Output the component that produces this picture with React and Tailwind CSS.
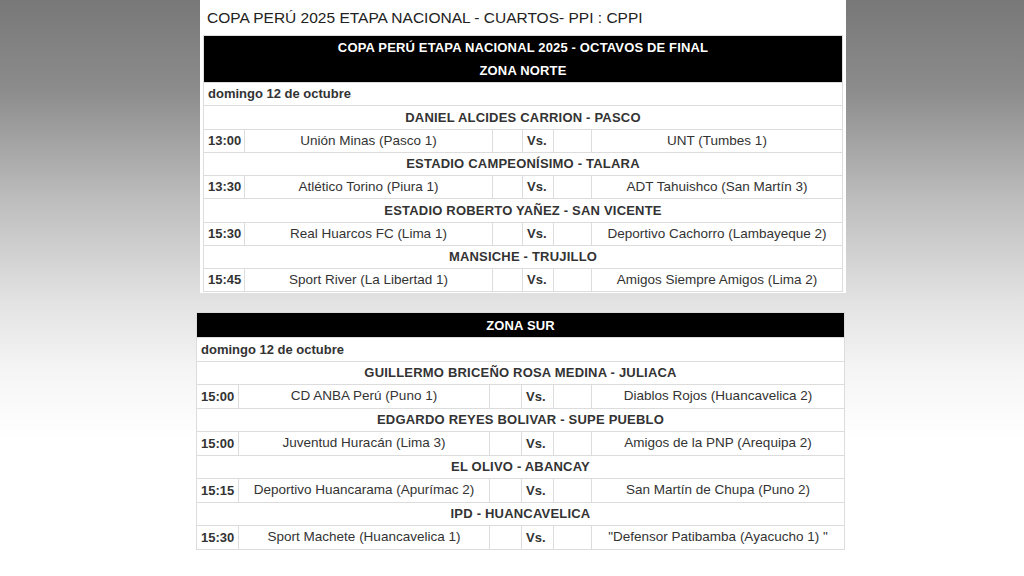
import React from 'react';

const norte = [
  { venue: 'DANIEL ALCIDES CARRION - PASCO', time: '13:00', home: 'Unión Minas (Pasco 1)', away: 'UNT (Tumbes 1)' },
  { venue: 'ESTADIO CAMPEONÍSIMO - TALARA', time: '13:30', home: 'Atlético Torino (Piura 1)', away: 'ADT Tahuishco (San Martín 3)' },
  { venue: 'ESTADIO ROBERTO YAÑEZ - SAN VICENTE', time: '15:30', home: 'Real Huarcos FC (Lima 1)', away: 'Deportivo Cachorro (Lambayeque 2)' },
  { venue: 'MANSICHE - TRUJILLO', time: '15:45', home: 'Sport River (La Libertad 1)', away: 'Amigos Siempre Amigos (Lima 2)' },
];

const sur = [
  { venue: 'GUILLERMO BRICEÑO ROSA MEDINA - JULIACA', time: '15:00', home: 'CD ANBA Perú (Puno 1)', away: 'Diablos Rojos (Huancavelica 2)' },
  { venue: 'EDGARDO REYES BOLIVAR - SUPE PUEBLO', time: '15:00', home: 'Juventud Huracán (Lima 3)', away: 'Amigos de la PNP (Arequipa 2)' },
  { venue: 'EL OLIVO - ABANCAY', time: '15:15', home: 'Deportivo Huancarama (Apurímac 2)', away: 'San Martín de Chupa (Puno 2)' },
  { venue: 'IPD - HUANCAVELICA', time: '15:30', home: 'Sport Machete (Huancavelica 1)', away: '"Defensor Patibamba (Ayacucho 1) "' },
];

const cell = 'border border-[#dcdcdc] px-1 py-0';

// rows for one zone: date line, then venue + match per game
function Fixtures({ rows, rowH }) {
  return (
    <>
      <tr className={`${rowH} bg-white`}>
        <td colSpan={6} className={`${cell} font-bold`}>domingo 12 de octubre</td>
      </tr>
      {rows.map((r) => (
        <React.Fragment key={r.venue}>
          <tr className={`${rowH} bg-white`}>
            <td colSpan={6} className={`${cell} text-center font-bold tracking-[0.2px]`}>{r.venue}</td>
          </tr>
          <tr className={`${rowH} bg-white`}>
            <td className={`${cell} font-bold`}>{r.time}</td>
            <td className={`${cell} text-center text-[13.5px]`}>{r.home}</td>
            <td className={cell}></td>
            <td className={`${cell} font-bold`}>Vs.</td>
            <td className={cell}></td>
            <td className={`${cell} text-center text-[13.5px]`}>{r.away}</td>
          </tr>
        </React.Fragment>
      ))}
    </>
  );
}

export default function App() {
  return (
    <div className="h-[576px] w-[1024px] overflow-hidden bg-[linear-gradient(to_bottom,#787878_0px,#8c8c8c_90px,#bdbdbd_200px,#e2e2e2_300px,#f5f5f5_370px,#ffffff_440px)] font-['Liberation_Sans',Arial,sans-serif] text-[13px] text-[#333]">
      {/* Zona Norte */}
      <div className="ml-[200px] w-[646px] bg-white pb-[1px]">
        <div className="flex h-[35px] items-center pl-[7px] pt-[1px] text-[15.5px] text-[#222]">
          COPA PERÚ 2025 ETAPA NACIONAL - CUARTOS- PPI : CPPI
        </div>
        <table className="ml-[3px] w-[640px] table-fixed border-collapse">
          <colgroup>
            <col className="w-[41px]" />
            <col className="w-[248px]" />
            <col className="w-[30px]" />
            <col className="w-[31px]" />
            <col className="w-[38px]" />
            <col />
          </colgroup>
          <tbody>
            <tr className="bg-black text-white">
              <td colSpan={6} className="border border-[#dcdcdc] py-0 text-center font-bold leading-[23px] tracking-[0.15px]">
                COPA PERÚ ETAPA NACIONAL 2025 - OCTAVOS DE FINAL<br />ZONA NORTE
              </td>
            </tr>
            <Fixtures rows={norte} rowH="h-[23.25px]" />
          </tbody>
        </table>
      </div>

      {/* Zona Sur */}
      <table className="ml-[196px] mt-[19px] w-[649px] table-fixed border-collapse">
        <colgroup>
          <col className="w-[42px]" />
          <col className="w-[251px]" />
          <col className="w-[32px]" />
          <col className="w-[32px]" />
          <col className="w-[38px]" />
          <col />
        </colgroup>
        <tbody>
          <tr className="h-[25px] bg-black text-white">
            <td colSpan={6} className="border border-[#dcdcdc] py-0 text-center font-bold tracking-[0.15px]">ZONA SUR</td>
          </tr>
          <Fixtures rows={sur} rowH="h-[23.5px]" />
        </tbody>
      </table>
    </div>
  );
}
